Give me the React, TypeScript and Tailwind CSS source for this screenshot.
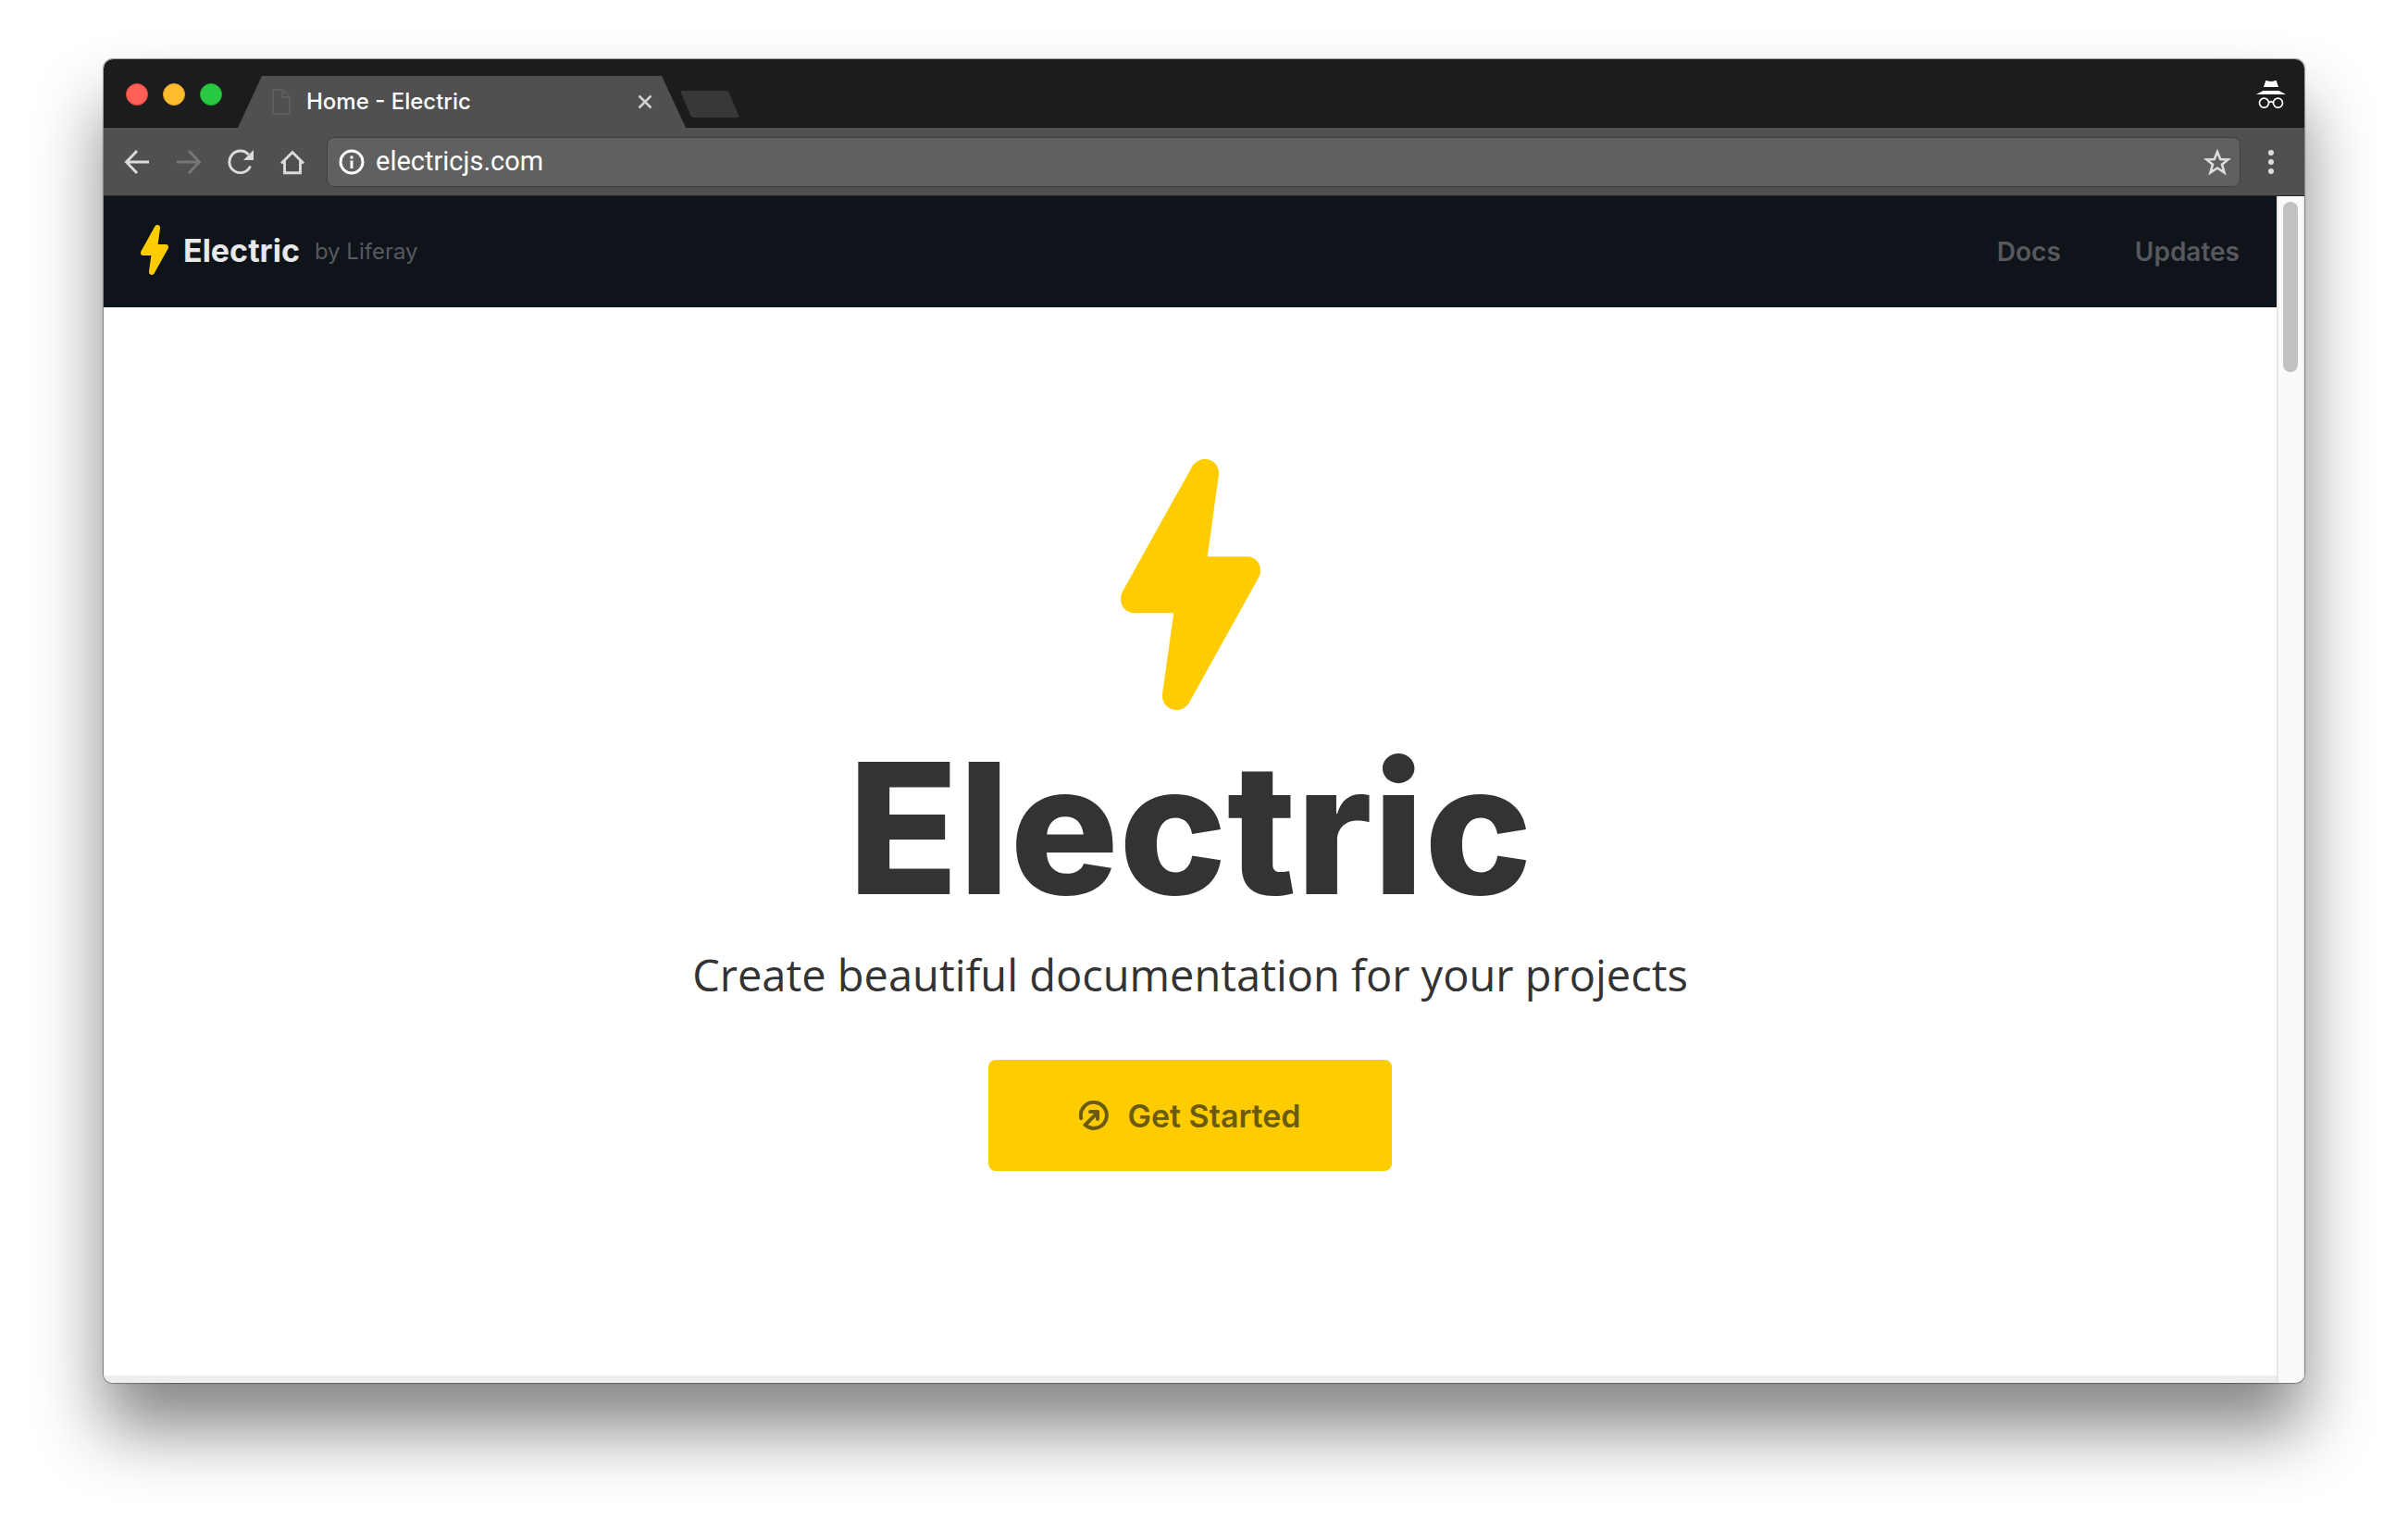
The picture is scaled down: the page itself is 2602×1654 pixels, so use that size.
import React from 'react';

function Bolt({ className }: { className: string }) {
  return (
    <svg viewBox="0 0 151 271" className={className} fill="#ffcc00" aria-hidden="true">
      <path d="M77.5 7.5C81 2.500 85.500 0 91 0C99.500 0 106 6.500 106 15C106 17 105.500 20 105.200 22L93.700 105.200H136.500C145 105.200 151 112 151 120C151 123 150.500 125.500 149 128L74 263C71 268 66 271 60.500 271C52 271 45 264.500 45 256C45 254 45.300 252 45.500 250L57.300 166.300H14.500C6.500 166.300 0 159.500 0 151.500C0 148.500 .7 145.500 2 143Z" />
    </svg>
  );
}

function IncognitoIcon() {
  return (
    <svg viewBox="0 0 32 30" className="h-[30px] w-8" fill="#fff" aria-hidden="true">
      <path d="M10.200 0.300Q10.500 -.3 11.200 0Q16 2 20.800 0Q21.500 -.3 21.800 .3L24 7H8ZM7.500 11H24.500L32 15H0Z" />
      <g fill="none" stroke="#fff" strokeWidth="1.700">
        <circle cx="8.500" cy="24.200" r="5" />
        <circle cx="23.500" cy="24.200" r="5" />
        <path d="M13.500 23.800Q16 22 18.500 23.800" />
      </g>
    </svg>
  );
}

function ToolIcon({ children, color = '#dcdcdc' }: { children: React.ReactNode; color?: string }) {
  return (
    <svg viewBox="0 0 32 32" className="size-8" fill="none" stroke={color} strokeWidth="2.900" aria-hidden="true">
      {children}
    </svg>
  );
}

function TitleBar() {
  return (
    <div className="flex h-[74px] items-end border-b border-[#111213] bg-[#1b1c1d] pl-6 pr-5">
      <div className="flex gap-4 pb-[23px]">
        <button aria-label="Close window" className="size-6 rounded-full border border-[#e2463f] bg-[#ff5f57]" />
        <button aria-label="Minimize window" className="size-6 rounded-full border border-[#e0a028] bg-[#ffbd2e]" />
        <button aria-label="Zoom window" className="size-6 rounded-full border border-[#1dad2b] bg-[#28c940]" />
      </div>
      <div className="relative z-10 -mb-px ml-[17px] flex h-14 w-[484px] items-center bg-[#505050] pl-9 pr-8 [clip-path:polygon(26px_0,calc(100%-26px)_0,100%_100%,0_100%)]">
        <svg viewBox="0 0 22 28" className="h-7 w-[22px]" fill="none" stroke="#5d5d5d" strokeWidth="2" aria-hidden="true">
          <path d="M2 1H12.500L20 8.500V27H2ZM12 1V9H20" />
        </svg>
        <span className="ml-4 flex-1 font-['Inter'] text-2xl font-medium text-white">Home - Electric</span>
        <button aria-label="Close tab" className="mr-1">
          <svg viewBox="0 0 16 16" className="size-4" stroke="#d2d2d2" strokeWidth="2.500" aria-hidden="true">
            <path d="M1.500 1.500L14.500 14.500M14.500 1.500L1.500 14.500" />
          </svg>
        </button>
      </div>
      <button aria-label="New tab" className="mb-2.5 h-[29px] w-[52px] skew-x-[23deg] rounded-[3px] bg-[#383838]" />
      <div className="ml-auto pb-5">
        <IncognitoIcon />
      </div>
    </div>
  );
}

function Toolbar() {
  return (
    <div className="flex h-[74px] items-center border-b border-[#262626] bg-[#505050] pl-5 pr-5">
      <div className="flex gap-6">
        <button aria-label="Back">
          <ToolIcon>
            <path d="M29 16H5M16 4L4.500 16L16 28" />
          </ToolIcon>
        </button>
        <button aria-label="Forward">
          <ToolIcon color="#767676">
            <path d="M3 16H27M16 4L27.500 16L16 28" />
          </ToolIcon>
        </button>
        <button aria-label="Reload">
          <ToolIcon>
            <path d="M26.500 20.500A11.800 11.800 0 1 1 24.500 8" />
            <path d="M30 3V14H19Z" fill="#dcdcdc" stroke="none" />
          </ToolIcon>
        </button>
        <button aria-label="Home">
          <ToolIcon>
            <path d="M4 17.500L16 5.500L28 17.500M7.500 15V27.700H24.500V15" />
          </ToolIcon>
        </button>
      </div>
      <div className="ml-[21px] flex h-[54px] flex-1 items-center rounded-lg border border-[#414141] bg-[#606060] pl-3 pr-2">
        <svg viewBox="0 0 28 28" className="size-7" fill="none" stroke="#fff" strokeWidth="3" aria-hidden="true">
          <circle cx="14" cy="14" r="12" />
          <path d="M14 12.500V21M14 7.500V10.500" />
        </svg>
        <input
          aria-label="Address"
          defaultValue="electricjs.com"
          className="ml-3 flex-1 bg-transparent font-['Roboto'] text-[29px] text-white outline-none"
        />
        <button aria-label="Bookmark this page">
          <svg viewBox="0 0 32 32" className="size-8" fill="none" stroke="#dcdcdc" strokeWidth="2.600" aria-hidden="true">
            <path d="M16 5L19.200 13L27.500 13.400L21 18.700L23.500 27.500L16 22.500L8.500 27.500L11 18.700L4.500 13.400L12.800 13Z" />
          </svg>
        </button>
      </div>
      <button aria-label="Menu" className="ml-[17px]">
        <svg viewBox="0 0 32 32" className="size-8" fill="#dcdcdc" aria-hidden="true">
          <circle cx="16" cy="6" r="3" />
          <circle cx="16" cy="16" r="3" />
          <circle cx="16" cy="26" r="3" />
        </svg>
      </button>
    </div>
  );
}

function SiteHeader() {
  return (
    <header className="flex h-[120px] items-center justify-between bg-[#0f141b] pl-10 pr-10 font-['Inter']">
      <a href="#home" className="flex items-center pb-1">
        <Bolt className="h-[54px] w-[30px]" />
        <span className="ml-4 text-[34px] font-bold text-[#e7e8e8]">Electric</span>
        <span className="ml-4 pt-1 text-2xl text-[#57595d]">by Liferay</span>
      </a>
      <nav className="flex gap-20 text-[28px] font-semibold text-[#57595d]">
        <a href="#docs">Docs</a>
        <a href="#updates">Updates</a>
      </nav>
    </header>
  );
}

function Hero() {
  return (
    <main className="flex flex-1 flex-col items-center border-b-8 border-[#eee] bg-white pt-[164px] text-[#333]">
      <Bolt className="h-[271px] w-[151px]" />
      <h1 className="mt-4 font-['Inter'] text-[196px] leading-[224px] font-extrabold">Electric</h1>
      <p className="mt-2.5 font-['Open_Sans'] text-[47px] leading-[72px]">Create beautiful documentation for your projects</p>
      <a
        href="#get-started"
        className="mt-14 flex h-[120px] w-[436px] items-center justify-center gap-5 rounded-lg bg-[#ffcc00] font-['Inter'] text-[34px] font-semibold text-[#6b5b10]"
      >
        <svg viewBox="0 0 32 32" className="size-8" fill="none" stroke="#6b5b10" strokeWidth="4" strokeLinecap="round" strokeLinejoin="round" aria-hidden="true">
          <path d="M2.200 19A14 14 0 1 1 6.500 26.300L19.500 13.300M12 12H20V20" />
        </svg>
        Get Started
      </a>
    </main>
  );
}

export default function App() {
  return (
    <div className="flex min-h-screen flex-col bg-white px-28 pt-16 pb-40">
      <div className="flex flex-1 flex-col overflow-hidden rounded-[10px] shadow-[0_0_1px_1px_rgba(0,0,0,0.35),0_50px_75px_rgba(0,0,0,0.48)]">
        <TitleBar />
        <Toolbar />
        <div className="flex flex-1">
          <div className="flex flex-1 flex-col">
            <SiteHeader />
            <Hero />
          </div>
          <div className="flex w-[30px] flex-col items-center border-r-2 border-l-2 border-r-[#f0f0f0] border-l-[#e7e7e7] bg-[#fafafa] pt-1.5">
            <div className="h-[184px] w-4 rounded-full bg-[#c1c1c1]" />
          </div>
        </div>
      </div>
    </div>
  );
}
